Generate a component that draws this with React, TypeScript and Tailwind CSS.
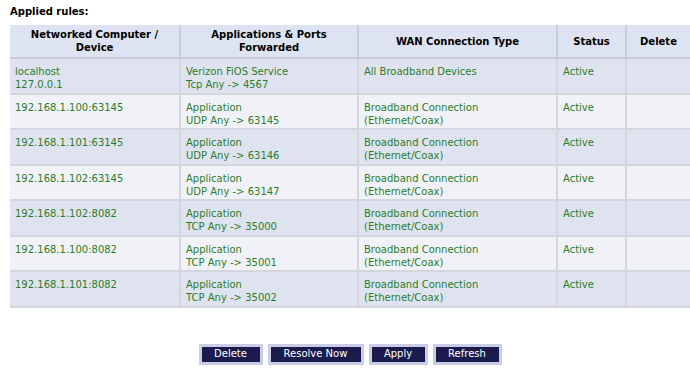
const rows = [
  ['localhost', '127.0.0.1', 'Verizon FiOS Service', 'Tcp Any -> 4567', 'All Broadband Devices', ''],
  ['192.168.1.100:63145', '', 'Application', 'UDP Any -> 63145', 'Broadband Connection', '(Ethernet/Coax)'],
  ['192.168.1.101:63145', '', 'Application', 'UDP Any -> 63146', 'Broadband Connection', '(Ethernet/Coax)'],
  ['192.168.1.102:63145', '', 'Application', 'UDP Any -> 63147', 'Broadband Connection', '(Ethernet/Coax)'],
  ['192.168.1.102:8082', '', 'Application', 'TCP Any -> 35000', 'Broadband Connection', '(Ethernet/Coax)'],
  ['192.168.1.100:8082', '', 'Application', 'TCP Any -> 35001', 'Broadband Connection', '(Ethernet/Coax)'],
  ['192.168.1.101:8082', '', 'Application', 'TCP Any -> 35002', 'Broadband Connection', '(Ethernet/Coax)'],
];

function Cell({ a, b }: { a: string; b?: string }) {
  return (
    <td className="align-top px-[5px] pt-[6px] border-l-2 border-b-2 border-[#d3d6dd] first:border-l-0">
      <div>{a}</div>
      {b ? <div>{b}</div> : null}
    </td>
  );
}

function Btn({ label, w }: { label: string; w: string }) {
  return (
    <button className={`${w} h-[21px] bg-[#1b1b4d] border-[3px] border-[#c9cee6] text-white text-[10px] leading-none`}>
      {label}
    </button>
  );
}

export default function App() {
  return (
    <div className="w-[690px] h-[380px] bg-white overflow-hidden font-['DejaVu_Sans',Verdana,sans-serif] text-[10px]">
      <div className="pl-[10px] pt-[4px] h-[25px] font-bold text-black">Applied rules:</div>
      <table className="ml-[10px] w-[680px] table-fixed border-collapse text-[#2b7d2b] leading-[13px]">
        <colgroup>
          <col className="w-[170px]" />
          <col className="w-[178px]" />
          <col className="w-[199px]" />
          <col className="w-[69px]" />
          <col className="w-[64px]" />
        </colgroup>
        <thead>
          <tr className="h-[33px] bg-[#dde3f0] text-black font-bold">
            <th className="text-center align-middle border-b-2 border-[#c8ccd6]">Networked Computer /<br />Device</th>
            <th className="text-center align-middle border-l-2 border-b-2 border-[#c8ccd6]">Applications &amp; Ports<br />Forwarded</th>
            <th className="text-center align-middle border-l-2 border-b-2 border-[#c8ccd6]">WAN Connection Type</th>
            <th className="text-center align-middle border-l-2 border-b-2 border-[#c8ccd6]">Status</th>
            <th className="text-center align-middle border-l-2 border-b-2 border-[#c8ccd6]">Delete</th>
          </tr>
        </thead>
        <tbody>
          {rows.map((r, i) => (
            <tr key={i} className={`h-[35.5px] ${i % 2 === 0 ? 'bg-[#dfe3ef]' : 'bg-[#f1f2f7]'}`}>
              <Cell a={r[0]} b={r[1]} />
              <Cell a={r[2]} b={r[3]} />
              <Cell a={r[4]} b={r[5]} />
              <Cell a="Active" />
              <Cell a="" />
            </tr>
          ))}
        </tbody>
      </table>
      <div className="ml-[10px] w-[680px] mt-[36px] flex justify-center gap-[5px]">
        <Btn label="Delete" w="w-[64px]" />
        <Btn label="Resolve Now" w="w-[96px]" />
        <Btn label="Apply" w="w-[59px]" />
        <Btn label="Refresh" w="w-[69px]" />
      </div>
    </div>
  );
}
